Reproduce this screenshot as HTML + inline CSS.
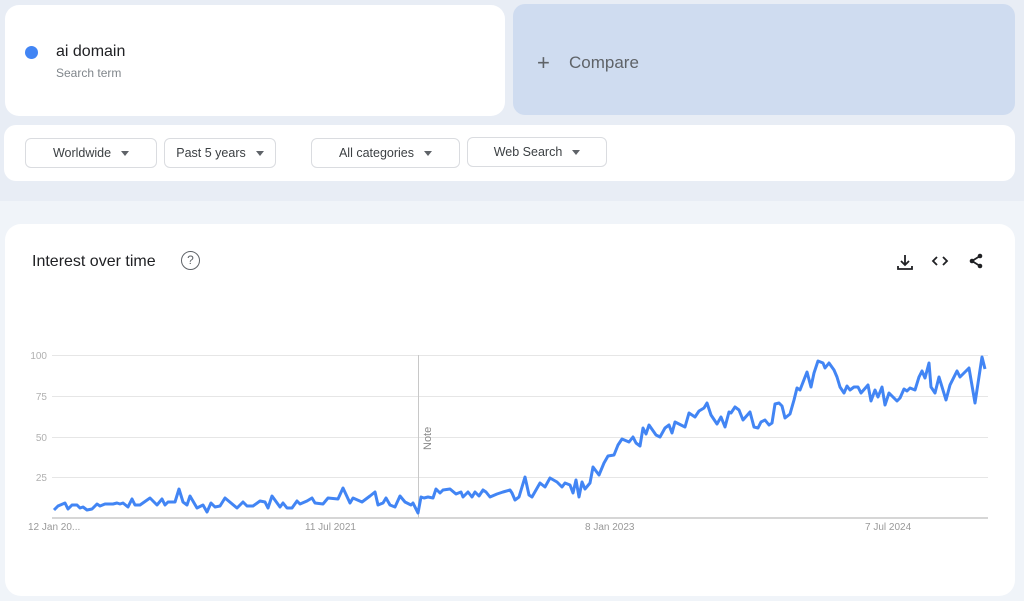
<!DOCTYPE html>
<html><head><meta charset="utf-8"><style>
*{box-sizing:border-box;margin:0;padding:0}
body{width:1024px;height:601px;overflow:hidden;background:#f0f4f9;font-family:"Liberation Sans",sans-serif;position:relative}
.top{position:absolute;left:0;top:0;width:1024px;height:201px;background:#e8edf5}
.card{position:absolute;background:#fff;border-radius:14px}
.dd{position:absolute;top:138px;height:30px;border:1px solid #dadce0;border-radius:6px;background:#fff;font-size:12.5px;color:#3c4043;display:flex;align-items:center;justify-content:center}
.dd span.t{display:inline-block;width:0;height:0;border-left:4.5px solid transparent;border-right:4.5px solid transparent;border-top:5px solid #5f6368;margin-left:10px}
</style></head><body>
<div class="top"></div>
<div class="card" style="left:5px;top:5px;width:500px;height:111px"></div>
<div style="position:absolute;left:25px;top:46px;width:13px;height:13px;border-radius:50%;background:#4285f4"></div>
<div style="position:absolute;left:56px;top:43px;font-size:16px;color:#202124">ai domain</div>
<div style="position:absolute;left:56px;top:66px;font-size:12px;color:#80868b">Search term</div>
<div style="position:absolute;left:513px;top:4px;width:502px;height:111px;background:#cfdcf0;border-radius:12px"></div>
<div style="position:absolute;left:537px;top:50px;font-size:22px;color:#5f6368;font-weight:300">+</div>
<div style="position:absolute;left:569px;top:53px;font-size:17px;color:#5f6368">Compare</div>
<div class="card" style="left:4px;top:125px;width:1011px;height:56px;border-radius:12px"></div>
<div class="dd" style="left:25px;width:132px">Worldwide<span class="t"></span></div>
<div class="dd" style="left:164px;width:112px">Past 5 years<span class="t"></span></div>
<div class="dd" style="left:311px;width:149px">All categories<span class="t"></span></div>
<div class="dd" style="left:467px;width:140px;top:137px">Web Search<span class="t"></span></div>
<div class="card" style="left:5px;top:224px;width:1010px;height:372px;border-radius:16px"></div>
<div style="position:absolute;left:32px;top:253px;font-size:16px;color:#202124">Interest over time</div>
<div style="position:absolute;left:181px;top:251px;width:19px;height:19px;border:1.5px solid #5f6368;border-radius:50%;font-size:12px;color:#5f6368;text-align:center;line-height:16px">?</div>
<svg style="position:absolute;left:0;top:0" width="1024" height="601">
<g stroke="#202124" stroke-width="1.8" fill="none">
<path d="M905 255v10M901 261l4 4 4-4M898 266v3h14v-3"/>
<path d="M937 257l-4 4 4 4M943 257l4 4-4 4"/>
<path d="M980 256l-8 5 8 5"/>
</g>
<g fill="#202124"><circle cx="980" cy="256" r="2.3"/><circle cx="972" cy="261" r="2.3"/><circle cx="980" cy="266" r="2.3"/></g>
<g stroke="#e6e6e6" stroke-width="1">
<line x1="52" y1="355.5" x2="988" y2="355.5"/><line x1="52" y1="396.5" x2="988" y2="396.5"/><line x1="52" y1="437.5" x2="988" y2="437.5"/><line x1="52" y1="477.5" x2="988" y2="477.5"/>
</g>
<line x1="52" y1="518" x2="988" y2="518" stroke="#c8c8c8" stroke-width="1.5"/>
<line x1="418.5" y1="355" x2="418.5" y2="518" stroke="#c8c8c8"/>
<text x="431" y="450" transform="rotate(-90 431 450)" font-size="11" fill="#888" font-family="Liberation Sans">Note</text>
<g font-size="10" fill="#b0b0b0" font-family="Liberation Sans" text-anchor="end">
<text x="47" y="359">100</text><text x="47" y="400">75</text><text x="47" y="441">50</text><text x="47" y="481">25</text></g>
<g font-size="10" fill="#999" font-family="Liberation Sans">
<text x="28" y="530">12 Jan 20...</text><text x="305" y="530">11 Jul 2021</text><text x="585" y="530">8 Jan 2023</text><text x="865" y="530">7 Jul 2024</text></g>
<polyline fill="none" stroke="#4285f4" stroke-width="3" stroke-linejoin="round" points="54,510 58,506 65,503 68,509 72,505 77,505 80,508 83,507 87,510 92,509 97,504 100,506 105,504 113,504 117,503 120,504 123,503 128,507 132,499 135,505 140,505 150,498 157,505 162,499 165,505 168,502 175,502 179,489 183,502 187,505 190,496 197,508 203,505 207,512 211,503 215,507 220,506 225,498 237,508 243,502 247,506 253,506 260,501 265,502 268,508 272,496 280,507 283,503 287,508 292,508 297,501 300,504 307,501 312,498 315,503 323,504 328,498 338,499 343,488 350,503 353,498 362,502 370,496 375,492 378,505 383,503 386,498 390,505 395,507 400,496 405,502 411,505 413,503 418,513 421,497 424,498 428,497 433,498 436,489 440,493 443,490 450,489 456,494 461,492 463,497 468,492 472,497 475,492 479,496 483,490 486,492 490,497 497,494 503,492 510,490 512,493 515,500 519,497 525,477 529,495 532,497 540,483 545,487 550,478 557,482 562,487 565,483 570,485 573,493 576,480 579,497 582,482 585,489 590,483 593,467 599,475 604,463 608,456 614,455 618,445 622,439 629,442 633,437 636,443 640,446 643,428 646,434 649,425 656,435 660,437 665,428 669,425 672,433 675,422 685,427 689,413 695,417 699,411 704,408 707,403 711,415 717,424 721,417 725,427 729,412 731,413 735,407 739,410 743,420 750,412 754,427 758,428 761,422 765,420 769,425 772,423 775,404 779,403 782,406 785,418 790,414 794,400 797,388 800,390 807,372 811,387 814,373 818,361 823,363 825,368 829,363 834,370 837,377 840,387 844,393 847,386 850,390 854,387 858,387 861,393 868,385 871,401 875,390 878,397 882,387 885,405 889,393 897,401 900,398 904,389 907,391 910,388 915,390 919,377 922,371 925,378 929,363 931,387 935,393 939,377 946,400 950,385 957,371 960,377 969,368 975,403 982,357 985,369"/>
</svg>
</body></html>
